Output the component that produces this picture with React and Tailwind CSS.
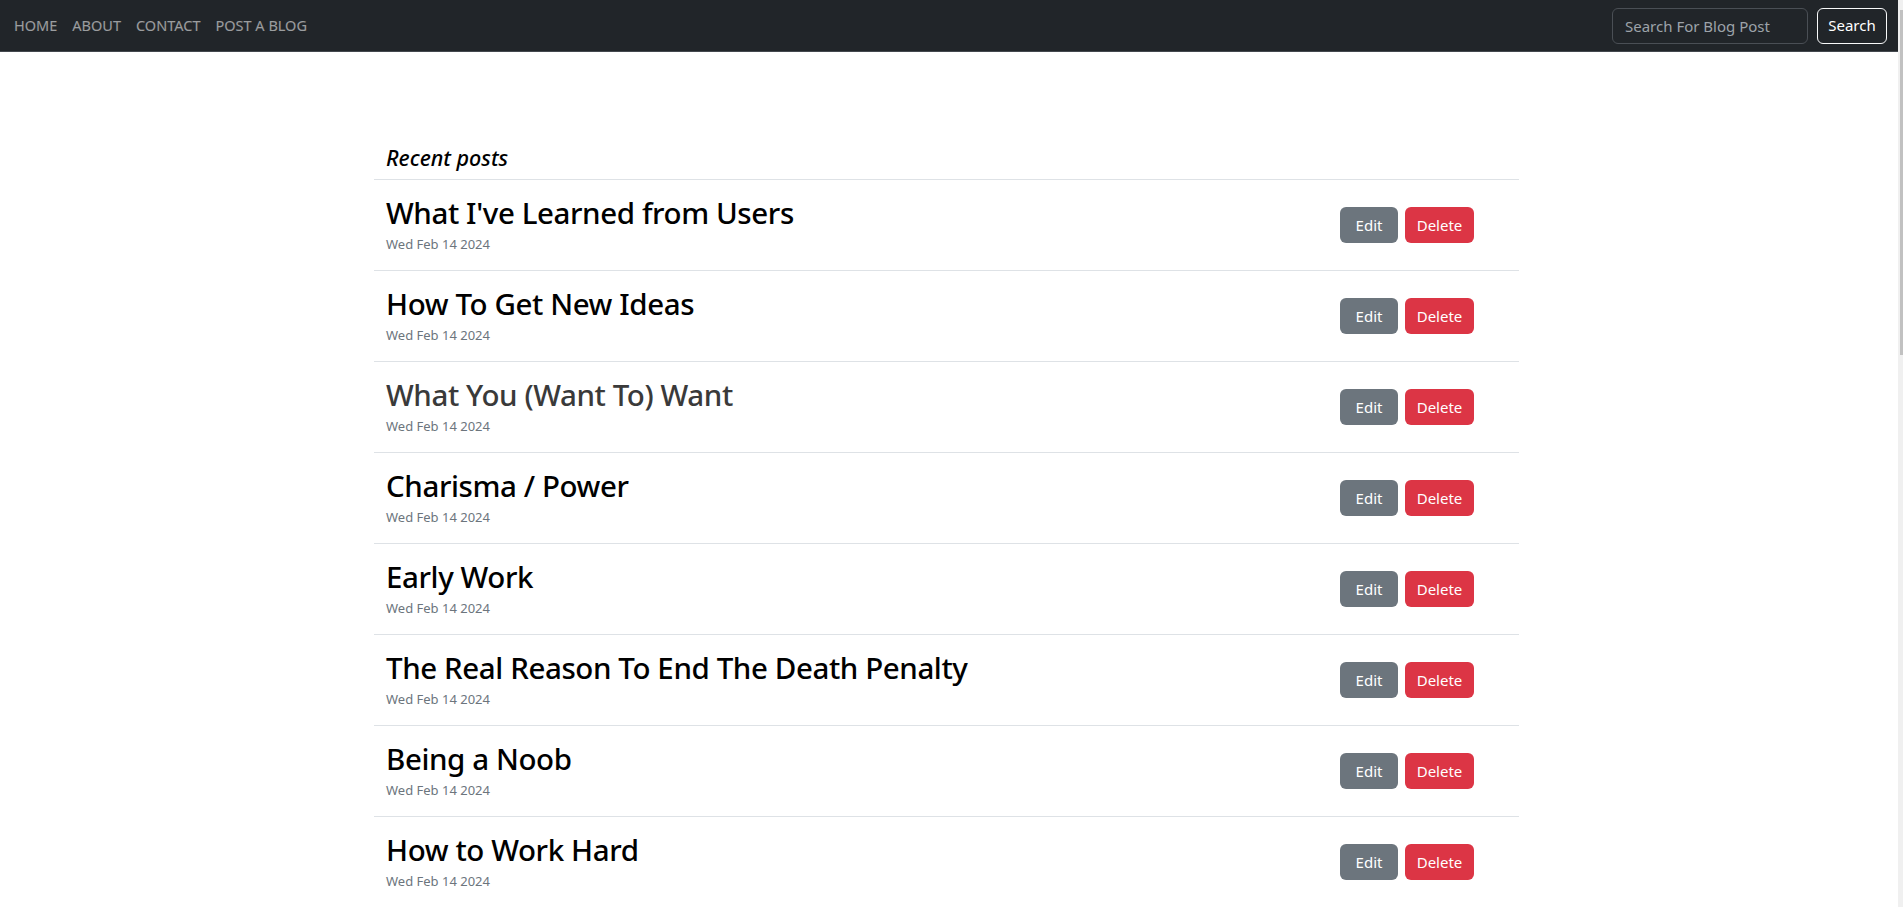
import React from 'react';

const posts = [
  "What I've Learned from Users",
  'How To Get New Ideas',
  'What You (Want To) Want',
  'Charisma / Power',
  'Early Work',
  'The Real Reason To End The Death Penalty',
  'Being a Noob',
  'How to Work Hard',
];

const font = { fontFamily: '"Noto Sans", "Open Sans", sans-serif' };

function NavBar() {
  return (
    <nav className="h-[52px] bg-[#212529] border-b border-[#43484e] flex items-center justify-between pl-[14px] pr-[11px]">
      <ul className="flex items-center gap-[15px] text-[14.5px] text-white/55">
        <li><a href="#">HOME</a></li>
        <li><a href="#">ABOUT</a></li>
        <li><a href="#">CONTACT</a></li>
        <li><a href="#">POST A BLOG</a></li>
      </ul>
      <form className="flex items-center gap-[9px]" onSubmit={(e) => e.preventDefault()}>
        <input
          type="search"
          placeholder="Search For Blog Post"
          className="w-[196px] h-[36px] rounded-md border border-[#4a4f55] bg-[#212529] px-[12px] text-[15px] text-white placeholder:text-[#9da3a9] outline-none"
        />
        <button className="w-[70px] h-[36px] rounded-md border border-[#f8f9fa] text-white text-[15px]">
          Search
        </button>
      </form>
    </nav>
  );
}

function PostRow({ title, muted }) {
  return (
    <li className="h-[91px] border-t border-[#dee2e6] flex items-center justify-between pl-[12px] pr-[45px]">
      <div className="self-start pt-[14px]">
        <h2
          className={`text-[29.5px] leading-[38px] tracking-[-0.4px] font-medium ${
            muted ? 'text-[#3a3a3a]' : 'text-black'
          }`}
        >
          {title}
        </h2>
        <div className="mt-[3px] text-[13px] leading-[18px] text-[#6c757d]">Wed Feb 14 2024</div>
      </div>
      <div className="flex items-center gap-[7px] text-[15px] text-white">
        <button className="w-[58px] h-[36px] rounded-md bg-[#6c757d]">Edit</button>
        <button className="w-[69px] h-[36px] rounded-md bg-[#dc3545]">Delete</button>
      </div>
    </li>
  );
}

export default function App() {
  return (
    <div className="h-[907px] flex overflow-hidden bg-white" style={font}>
      <div className="flex-1 min-w-0">
        <NavBar />
        <main className="ml-[374px] w-[1145px] pt-[93px]">
          <h5 className="pl-[12px] pb-[8px] text-[21.5px] leading-[26px] italic font-medium text-black">
            Recent posts
          </h5>
          <ul>
            {posts.map((p, i) => (
              <PostRow key={p} title={p} muted={i === 2} />
            ))}
          </ul>
        </main>
      </div>
      {/* page scrollbar */}
      <div className="w-[5px] bg-[#f0f0f0] pt-[10px] pl-[2px]">
        <div className="w-[3px] h-[345px] bg-[#c1c1c1]" />
      </div>
    </div>
  );
}
